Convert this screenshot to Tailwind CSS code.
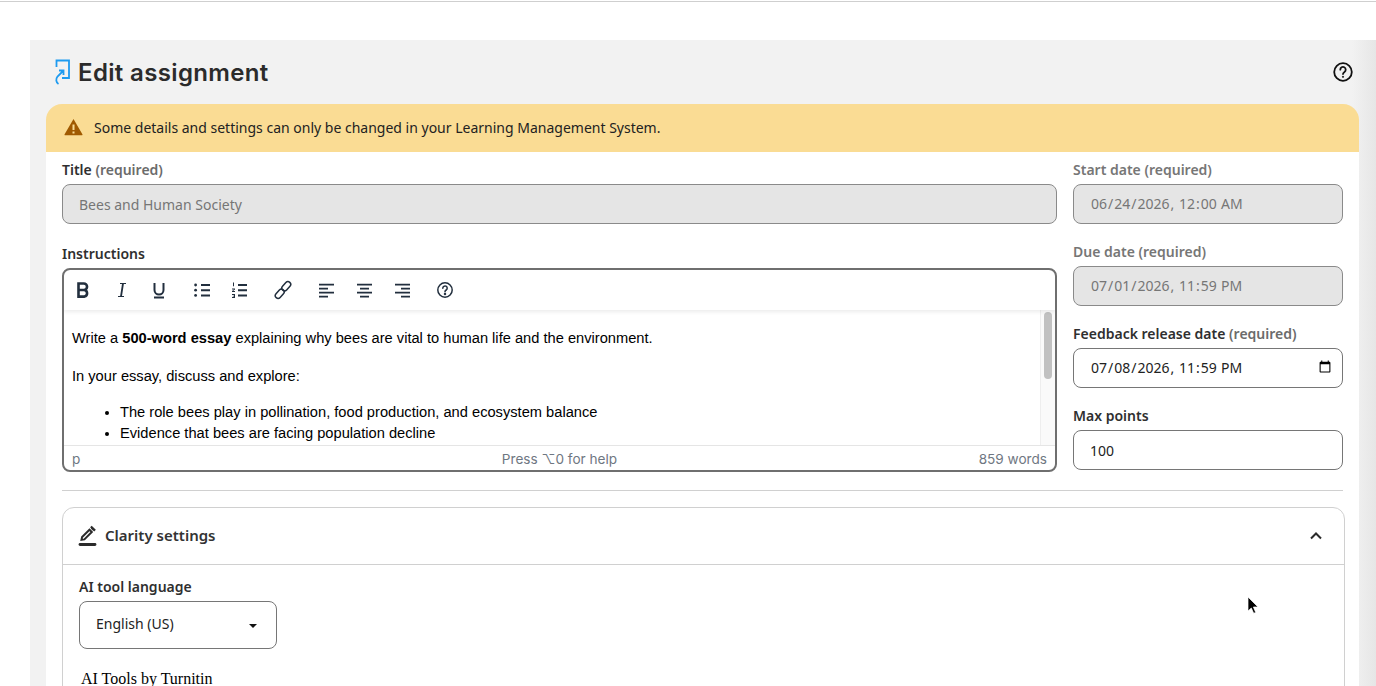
<!DOCTYPE html>
<html lang="en">
<head>
<meta charset="utf-8">
<title>Edit assignment</title>
<script src="https://cdn.jsdelivr.net/npm/@tailwindcss/browser@4"></script>
</head>
<body class="h-[686px] w-[1376px] overflow-hidden bg-white font-['Noto_Sans',sans-serif] text-[#2f2f2f]">
<div class="mt-px h-px bg-[#cfcfcf]"></div>
<main class="relative ml-[30px] mt-[38px] h-[646px] overflow-hidden bg-[#f2f2f2] pl-4 pr-[17px]">
  <div class="pointer-events-none absolute right-0 top-0 h-[646px] w-[24px] bg-gradient-to-r from-[#f2f2f2] to-[#e6e6e6]"></div>
  <header class="relative flex h-16 items-center justify-between pl-[8px] pr-[6px]">
    <div class="flex items-center gap-[6px]">
      <svg class="h-[26px] w-[18px]" viewBox="0 0 18 26" fill="none" stroke="#1e9bf0" stroke-width="1.8"><path d="M2.500 8V1.500H15V19H8"/><path d="M5 11.500h4.500V16M9.500 11.500l-6 6C1.500 20 2 23.500 4.500 25"/></svg>
      <h1 class="pt-[2px] font-['Inter',sans-serif] text-[24px] font-semibold leading-8 tracking-[0.35px] text-[#2b2b2b]">Edit assignment</h1>
    </div>
    <svg class="h-[20px] w-[20px]" viewBox="0 0 20 20" fill="none" stroke="#111" stroke-width="1.8"><circle cx="10" cy="10" r="8.800"/><path d="M7.300 7.700a2.700 2.700 0 1 1 4.200 2.200c-1 .7-1.500 1.100-1.500 2.200" stroke-linecap="round"/><circle cx="10" cy="14.800" r=".6" fill="#111" stroke-width="1"/></svg>
  </header>
  <section class="relative">
    <div class="flex h-12 items-center gap-[11px] rounded-t-[16px] bg-[#fadc94] pb-[2px] pl-[18px] text-[14px] text-[#222]">
      <svg class="h-[18px] w-[19px]" viewBox="0 0 19 18"><path fill="#a05a00" fill-rule="evenodd" d="M9.500 1 .6 16.200c-.3.500 0 1.100.7 1.100h16.400c.7 0 1-.6.7-1.100L9.500 1Zm-1 5.500h2V12h-2V6.500Zm0 7h2v2h-2v-2Z"/></svg>
      <span>Some details and settings can only be changed in your Learning Management System.</span>
    </div>
    <div class="h-[600px] bg-white px-4">
      <div class="flex gap-4 pt-[8px]">
        <div class="w-[995px]">
          <label class="block h-6 text-[14px] font-semibold leading-5">Title <span class="text-[#6b6b6b]">(required)</span></label>
          <input disabled value="Bees and Human Society" class="h-10 w-full rounded-lg border border-[#8a8a8a] bg-[#e5e5e5] px-4 text-[14px] text-[#767676]">
          <label class="mt-5 block h-[24px] text-[14px] font-semibold leading-5">Instructions</label>
          <div class="h-[204px] overflow-hidden rounded-lg border-2 border-[#6f6f6f] bg-white">
            <div class="relative z-10 flex h-10 items-center pl-[9px] text-[#222f3e] shadow-[0_2px_4px_rgba(0,0,0,0.08)]">
              <svg class="h-5 w-5" viewBox="0 0 20 20" fill="none" stroke="#222f3e" stroke-width="2.600"><path d="M5.500 3.500h5.300a3.200 3.200 0 0 1 0 6.500H5.500zM5.500 10h6a3.400 3.400 0 0 1 0 6.600h-6z"/></svg>
              <svg class="ml-[19px] h-5 w-5" viewBox="0 0 20 20" fill="none" stroke="#222f3e"><path stroke-width="1.200" d="M8 3.500h6M6 16.500h6"/><path stroke-width="1.800" d="M11 3.500 9 16.500"/></svg>
              <svg class="ml-[17px] h-5 w-5" viewBox="0 0 20 20" fill="none" stroke="#222f3e" stroke-width="2"><path d="M5.500 3v7a4.500 4.500 0 0 0 9 0V3M5 17.500h10"/></svg>
              <svg class="ml-[23px] h-5 w-5" viewBox="0 0 20 20" fill="#222f3e"><path d="M9 4h9v2H9zM9 9.200h9v2H9zM9 14.400h9v2H9z"/><circle cx="3.600" cy="5" r="1.400"/><circle cx="3.600" cy="10.200" r="1.400"/><circle cx="3.600" cy="15.400" r="1.400"/></svg>
              <svg class="ml-[18px] h-5 w-5" viewBox="0 0 20 20" fill="#222f3e"><path d="M8 4h9v2H8zM8 9.200h9v2H8zM8 14.400h9v2H8z"/><path d="M3 2.600h1v3.600H3zM2 8.400h3v1L3 11h2v1H2v-1l2-1.600H2zM2 14h3v4H2v-1h2v-.5H2.800v-.8H4V15H2z"/></svg>
              <svg class="ml-[23px] h-5 w-5" viewBox="0 0 20 20" fill="none" stroke="#222f3e" stroke-width="1.500"><rect x="10.500" y="1" width="5.500" height="10.500" rx="2.750" transform="rotate(42 13.250 6.250)"/><rect x="4" y="8.500" width="5.500" height="10.500" rx="2.750" transform="rotate(42 6.750 13.750)"/></svg>
              <svg class="ml-[23px] h-5 w-5" viewBox="0 0 20 20" fill="#222f3e"><path d="M3 3.800h15v1.800H3zM3 7.800h9v1.800H3zM3 11.800h15v1.800H3zM3 15.800h9v1.800H3z"/></svg>
              <svg class="ml-[18px] h-5 w-5" viewBox="0 0 20 20" fill="#222f3e"><path d="M3 3.800h15v1.800H3zM6 7.800h9v1.800H6zM3 11.800h15v1.800H3zM6 15.800h9v1.800H6z"/></svg>
              <svg class="ml-[18px] h-5 w-5" viewBox="0 0 20 20" fill="#222f3e"><path d="M3 3.800h15v1.800H3zM9 7.800h9v1.800H9zM3 11.800h15v1.800H3zM9 15.800h9v1.800H9z"/></svg>
              <svg class="ml-[23px] h-5 w-5" viewBox="0 0 20 20" fill="none" stroke="#222f3e" stroke-width="1.500"><circle cx="10" cy="10" r="7.200"/><path d="M7.800 8.200a2.200 2.200 0 1 1 3.400 1.800c-.8.500-1.200.9-1.200 1.800" stroke-linecap="round"/><circle cx="10" cy="14" r=".5" fill="#222f3e"/></svg>
            </div>
            <div class="relative h-[136px] overflow-hidden border-b border-[#e5e5e5] pl-2 font-['Liberation_Sans',sans-serif] text-[14.670px] leading-[21px] text-black">
              <p class="pt-[18px]">Write a <strong>500-word essay</strong> explaining why bees are vital to human life and the environment.</p>
              <p class="mt-[17px]">In your essay, discuss and explore:</p>
              <ul class="mt-[15px] list-disc pl-12">
                <li>The role bees play in pollination, food production, and ecosystem balance</li>
                <li>Evidence that bees are facing population decline</li>
              </ul>
              <div class="absolute inset-y-0 right-0 w-[15px] border-l border-[#eeeeee] bg-[#fafafa]"><div class="ml-[3px] mt-[2px] h-[67px] w-2 rounded bg-[#c1c1c1]"></div></div>
            </div>
            <div class="flex h-[24px] items-center justify-between px-2 pt-[2px] font-['Inter',sans-serif] text-[13.600px] text-[#6f7782]">
              <span class="w-[120px]">p</span><span>Press ⌥0 for help</span><span class="w-[120px] text-right">859 words</span>
            </div>
          </div>
        </div>
        <div class="w-[270px]">
          <label class="block h-6 text-[14px] font-semibold leading-5 text-[#767676]">Start date (required)</label>
          <input disabled type="datetime-local" value="2026-06-24T00:00" class="h-10 w-full rounded-lg border border-[#8a8a8a] bg-[#e5e5e5] pb-[2px] pl-4 pr-4 text-[14px] text-[#767676]">
          <label class="mt-[18px] block h-6 text-[14px] font-semibold leading-5 text-[#767676]">Due date (required)</label>
          <input disabled type="datetime-local" value="2026-07-01T23:59" class="h-10 w-full rounded-lg border border-[#8a8a8a] bg-[#e5e5e5] pb-[2px] pl-4 pr-4 text-[14px] text-[#767676]">
          <label class="mt-[18px] block h-6 text-[14px] font-semibold leading-5">Feedback release date <span class="text-[#6b6b6b]">(required)</span></label>
          <input type="datetime-local" value="2026-07-08T23:59" class="h-10 w-full rounded-lg border border-[#767676] bg-white pb-[2px] pl-4 pr-2 text-[14px] text-[#222]">
          <label class="mt-[18px] block h-6 text-[14px] font-semibold leading-5">Max points</label>
          <input value="100" class="h-10 w-full rounded-lg border border-[#767676] bg-white px-4 text-[14px] text-[#222]">
        </div>
      </div>
      <hr class="mt-[18px] border-[#d0d0d0]">
      <div class="mt-4 h-[300px] w-[1283px] rounded-t-xl border border-[#d0d0d0]">
        <div class="flex h-[57px] items-center justify-between border-b border-[#d0d0d0] pl-[15px] pr-[22px]">
          <div class="flex items-center gap-[8px]">
            <svg class="h-[22px] w-[19px]" viewBox="0 0 19 22" fill="none" stroke="#2b2b2b"><path stroke-width="2.800" stroke-linecap="round" d="M2 19.500h15"/><path stroke-width="2" d="M3.500 14.800l.6-2.800L11.500 4.700l2.300 2.300-7.400 7.400z"/><path stroke-width="2.600" d="M13 3.200l.7-.7 2.300 2.300-.7.7"/></svg>
            <h2 class="pb-[2px] text-[15px] font-semibold leading-5 text-[#333]">Clarity settings</h2>
          </div>
          <svg class="h-3 w-3" viewBox="0 0 12 12" fill="none" stroke="#2b2b2b" stroke-width="2"><path d="m1 8.500 5-5 5 5"/></svg>
        </div>
        <div class="px-4 pt-[12px]">
          <label class="block h-6 text-[14px] font-semibold leading-5">AI tool language</label>
          <div class="flex h-12 w-[198px] items-center justify-between rounded-lg border border-[#767676] pb-[2px] pl-4 pr-[19px] text-[14px] text-[#222]">
            <span class="-mt-[2px]">English (US)</span><span class="mt-[4px] h-0 w-0 border-x-[4px] border-t-[4px] border-x-transparent border-t-[#111]"></span>
          </div>
          <p class="mt-[21px] pl-[2px] font-['Liberation_Serif',serif] text-[16px] leading-[18px] text-black">AI Tools by Turnitin</p>
        </div>
      </div>
    </div>
  </section>
  <svg class="absolute left-[1217px] top-[556px] h-[20px] w-[14px]" viewBox="0 0 14 20"><path d="M1 1v14l3.300-3 2.400 5.300 2-.9L6.400 11H11z" fill="#000" stroke="#fff" stroke-width=".7"/></svg>
</main>
</body>
</html>
